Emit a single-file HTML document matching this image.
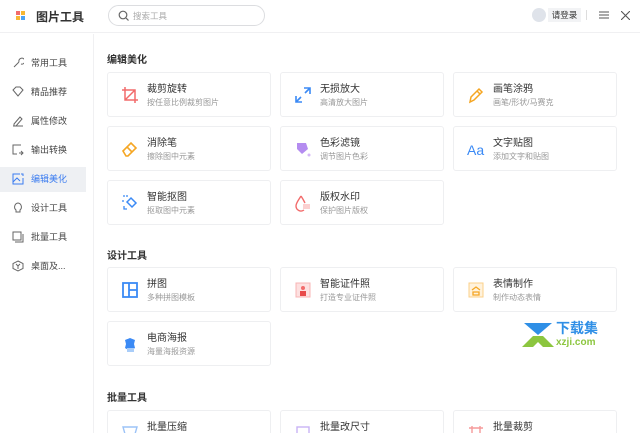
<!DOCTYPE html>
<html style="overflow:hidden;width:640px;height:433px"><head><meta charset="utf-8"><style>
*{margin:0;padding:0;box-sizing:border-box}
body{width:640px;height:433px;overflow:hidden;background:#fff;font-family:"Liberation Sans","Noto Sans CJK SC",sans-serif;position:relative;color:#333}
.hdr{position:absolute;left:0;top:0;width:640px;height:33px;border-bottom:1px solid #f0f0f2}
.side{position:absolute;left:0;top:34px;width:94px;height:399px;border-right:1px solid #f0f0f2}
.si{position:absolute;left:0;width:86px;height:25px;font-size:9px;color:#444;line-height:25px;padding-left:31px}
.si.act{background:#eef0f3;color:#3b7cf0}
.si svg{position:absolute;left:12px;top:6px}
.sec{position:absolute;left:107px;font-size:10px;font-weight:bold;color:#333}
.card{position:absolute;width:164px;height:45px;border:1px solid #eeeff1;border-radius:3px}
.card.b{height:23px;overflow:hidden;border-bottom:none;border-radius:3px 3px 0 0}
.card .t{position:absolute;left:39px;top:7px;font-size:10px;color:#333}
.card .s{position:absolute;left:39px;top:24px;font-size:8px;color:#999}
.card svg{position:absolute;left:13px;top:13px}
</style></head><body>
<div class="hdr">
 <div style="position:absolute;left:16px;top:11px;width:4px;height:4px;background:#f26b6b"></div>
 <div style="position:absolute;left:21px;top:11px;width:4px;height:4px;background:#f7b733"></div>
 <div style="position:absolute;left:16px;top:16px;width:4px;height:4px;background:#f7b733"></div>
 <div style="position:absolute;left:21px;top:16px;width:4px;height:4px;background:#4aa3f5"></div>
 <div style="position:absolute;left:36px;top:8px;font-size:12px;font-weight:bold;color:#333">图片工具</div>
 <div style="position:absolute;left:108px;top:5px;width:157px;height:21px;border:1px solid #dcdde0;border-radius:11px"></div>
 <svg style="position:absolute;left:118px;top:10px" width="11" height="11"><circle cx="5" cy="5" r="3.8" fill="none" stroke="#666" stroke-width="1.2"/><path d="M8 8l2.5 2.5" stroke="#666" stroke-width="1.2"/></svg>
 <div style="position:absolute;left:133px;top:10px;font-size:8.5px;color:#aaa">搜索工具</div>
 <div style="position:absolute;left:532px;top:8px;width:14px;height:14px;border-radius:50%;background:#dfe3ea"></div>
 <div style="position:absolute;left:548px;top:8px;width:33px;height:14px;background:#f2f3f5;font-size:8.5px;color:#333;text-align:center;line-height:14px">请登录</div>
 <div style="position:absolute;left:586px;top:10px;width:1px;height:10px;background:#ddd"></div>
 <svg style="position:absolute;left:599px;top:11px" width="10" height="8"><path d="M0 1h10M0 4h10M0 7h10" stroke="#555" stroke-width="1.1"/></svg>
 <svg style="position:absolute;left:621px;top:11px" width="9" height="9"><path d="M0 0l9 9M9 0l-9 9" stroke="#555" stroke-width="1.1"/></svg>
</div>
<div class="side">
 <div class="si" style="top:17px"><svg width="12" height="12"><path d="M2 10l5-5M7 5a3 3 0 1 1 2 2" stroke="#666" fill="none"/></svg>常用工具</div>
 <div class="si" style="top:46px"><svg width="12" height="12"><path d="M1 4l3-3h4l3 3-5 6z" stroke="#666" fill="none"/></svg>精品推荐</div>
 <div class="si" style="top:75px"><svg width="12" height="12"><path d="M2 9l6-7 2 2-6 7H2zM1 11h10" stroke="#666" fill="none"/></svg>属性修改</div>
 <div class="si" style="top:104px"><svg width="12" height="12"><path d="M9 1H1v9h4M7 9h4M9 7l2 2-2 2" stroke="#666" fill="none"/></svg>输出转换</div>
 <div class="si act" style="top:133px"><svg width="12" height="12"><path d="M8 1H1v10h10V5M1 9l4-4 3 3M9 1h2v2" stroke="#3b7cf0" fill="none"/></svg>编辑美化</div>
 <div class="si" style="top:162px"><svg width="12" height="12"><path d="M6 1a4 4 0 0 1 2 7v2H4V8a4 4 0 0 1 2-7z" stroke="#666" fill="none"/></svg>设计工具</div>
 <div class="si" style="top:191px"><svg width="12" height="12"><rect x="1" y="1" width="8" height="8" stroke="#666" fill="none"/><path d="M3 11h8V3" stroke="#666" fill="none"/></svg>批量工具</div>
 <div class="si" style="top:220px"><svg width="12" height="12"><path d="M6 1l5 2.5v5L6 11 1 8.5v-5z" stroke="#666" fill="none"/><path d="M4 4l2 2 2-2M6 6v3" stroke="#666" fill="none"/></svg>桌面及...</div>
</div>

<div class="sec" style="top:51px">编辑美化</div>
<div class="card" style="left:107px;top:72px"><svg width="18" height="18"><path d="M4 1v13h13M1 4h13v13M4 14L14 4" stroke="#f26b6b" stroke-width="1.5" fill="none"/></svg><div class="t">裁剪旋转</div><div class="s">按任意比例裁剪图片</div></div>
<div class="card" style="left:280px;top:72px"><svg width="18" height="18"><path d="M10 2h6v6M16 2l-5 5M8 16H2v-6M2 16l5-5" stroke="#3b8af5" stroke-width="1.6" fill="none"/></svg><div class="t">无损放大</div><div class="s">高清放大图片</div></div>
<div class="card" style="left:453px;top:72px"><svg width="18" height="18"><path d="M3 16l1-5 8-8 3 3-8 8zM10 5l3 3" stroke="#f5a623" stroke-width="1.5" fill="none"/></svg><div class="t">画笔涂鸦</div><div class="s">画笔/形状/马赛克</div></div>
<div class="card" style="left:107px;top:126px"><svg width="18" height="18"><path d="M2 11l8-8 5 5-8 8H5zM6 7l5 5" stroke="#f5a623" stroke-width="1.6" fill="none"/></svg><div class="t">消除笔</div><div class="s">擦除图中元素</div></div>
<div class="card" style="left:280px;top:126px"><svg width="18" height="18"><path d="M3 3h9l2 6-6 5-5-5z" fill="#b48cf0"/><circle cx="15" cy="15" r="1.5" fill="#d4b8f7"/></svg><div class="t">色彩滤镜</div><div class="s">调节图片色彩</div></div>
<div class="card" style="left:453px;top:126px"><svg width="20" height="18"><text x="0" y="15" font-size="14" fill="#3b8af5" font-family="Liberation Sans">Aa</text></svg><div class="t">文字贴图</div><div class="s">添加文字和贴图</div></div>
<div class="card" style="left:107px;top:180px"><svg width="18" height="18"><path d="M6 8l4-4 5 5-4 4z" stroke="#3b8af5" stroke-width="1.5" fill="none"/><path d="M2 2h2M2 6v2M6 1v2M3 12v3h3" stroke="#3b8af5" stroke-width="1.3" fill="none"/></svg><div class="t">智能抠图</div><div class="s">抠取图中元素</div></div>
<div class="card" style="left:280px;top:180px"><svg width="18" height="18"><path d="M7 2C4 7 2 9 2 12a5 5 0 0 0 8 4M7 2c2 3 3 5 4 7" stroke="#f26b6b" stroke-width="1.4" fill="none"/><rect x="9" y="10" width="7" height="5" fill="#fbd0d0"/></svg><div class="t">版权水印</div><div class="s">保护图片版权</div></div>

<div class="sec" style="top:247px">设计工具</div>
<div class="card" style="left:107px;top:267px"><svg width="18" height="18"><rect x="2" y="2" width="14" height="14" stroke="#3b8af5" stroke-width="1.8" fill="#fff"/><path d="M8 2v14M8 9h8" stroke="#3b8af5" stroke-width="1.8"/></svg><div class="t">拼图</div><div class="s">多种拼图模板</div></div>
<div class="card" style="left:280px;top:267px"><svg width="18" height="18"><rect x="2" y="2" width="14" height="14" fill="#fde0e0" stroke="#f8b4b4"/><circle cx="9" cy="7" r="2" fill="#f26b6b"/><rect x="6" y="10" width="6" height="5" fill="#e84a4a"/></svg><div class="t">智能证件照</div><div class="s">打造专业证件照</div></div>
<div class="card" style="left:453px;top:267px"><svg width="18" height="18"><rect x="2" y="2" width="14" height="14" fill="#fff2dc" stroke="#fbd08a"/><path d="M5 9l4-3 4 3M6 11h6v3H6z" stroke="#f5a623" stroke-width="1.3" fill="none"/></svg><div class="t">表情制作</div><div class="s">制作动态表情</div></div>
<div class="card" style="left:107px;top:321px"><svg width="18" height="18"><path d="M4 5l5-2 5 2-1 4 1 4-5 3-5-3 1-4z" fill="#3b8af5"/><rect x="6" y="13" width="7" height="4" fill="#a9cdf9"/></svg><div class="t">电商海报</div><div class="s">海量海报资源</div></div>

<div class="sec" style="top:389px">批量工具</div>
<div class="card b" style="left:107px;top:410px"><svg width="18" height="10"><path d="M2 3h14l-2 7H4z" stroke="#9cc3f7" stroke-width="1.4" fill="none"/></svg><div class="t">批量压缩</div></div>
<div class="card b" style="left:280px;top:410px"><svg width="18" height="10"><rect x="3" y="3" width="12" height="8" stroke="#c9b3f5" stroke-width="1.4" fill="none"/></svg><div class="t">批量改尺寸</div></div>
<div class="card b" style="left:453px;top:410px"><svg width="18" height="10"><path d="M2 4h14M5 2v8M13 2v8" stroke="#f59a9a" stroke-width="1.4" fill="none"/></svg><div class="t">批量裁剪</div></div>

<svg style="position:absolute;left:522px;top:322px" width="32" height="26"><path d="M2 1h28L16 13z" fill="#2f8fe6"/><path d="M10 1h12v6H10z" fill="#2f8fe6"/><path d="M0 25L11 14h10l11 11H21l-5-5-5 5z" fill="#8cc63f"/></svg>
<div style="position:absolute;left:556px;top:321px;font-size:14px;font-weight:bold;color:#2f8fe6;line-height:15px">下载集</div>
<div style="position:absolute;left:556px;top:337px;font-size:10px;color:#8cc63f;font-weight:bold">xzji.com</div>
</body></html>
